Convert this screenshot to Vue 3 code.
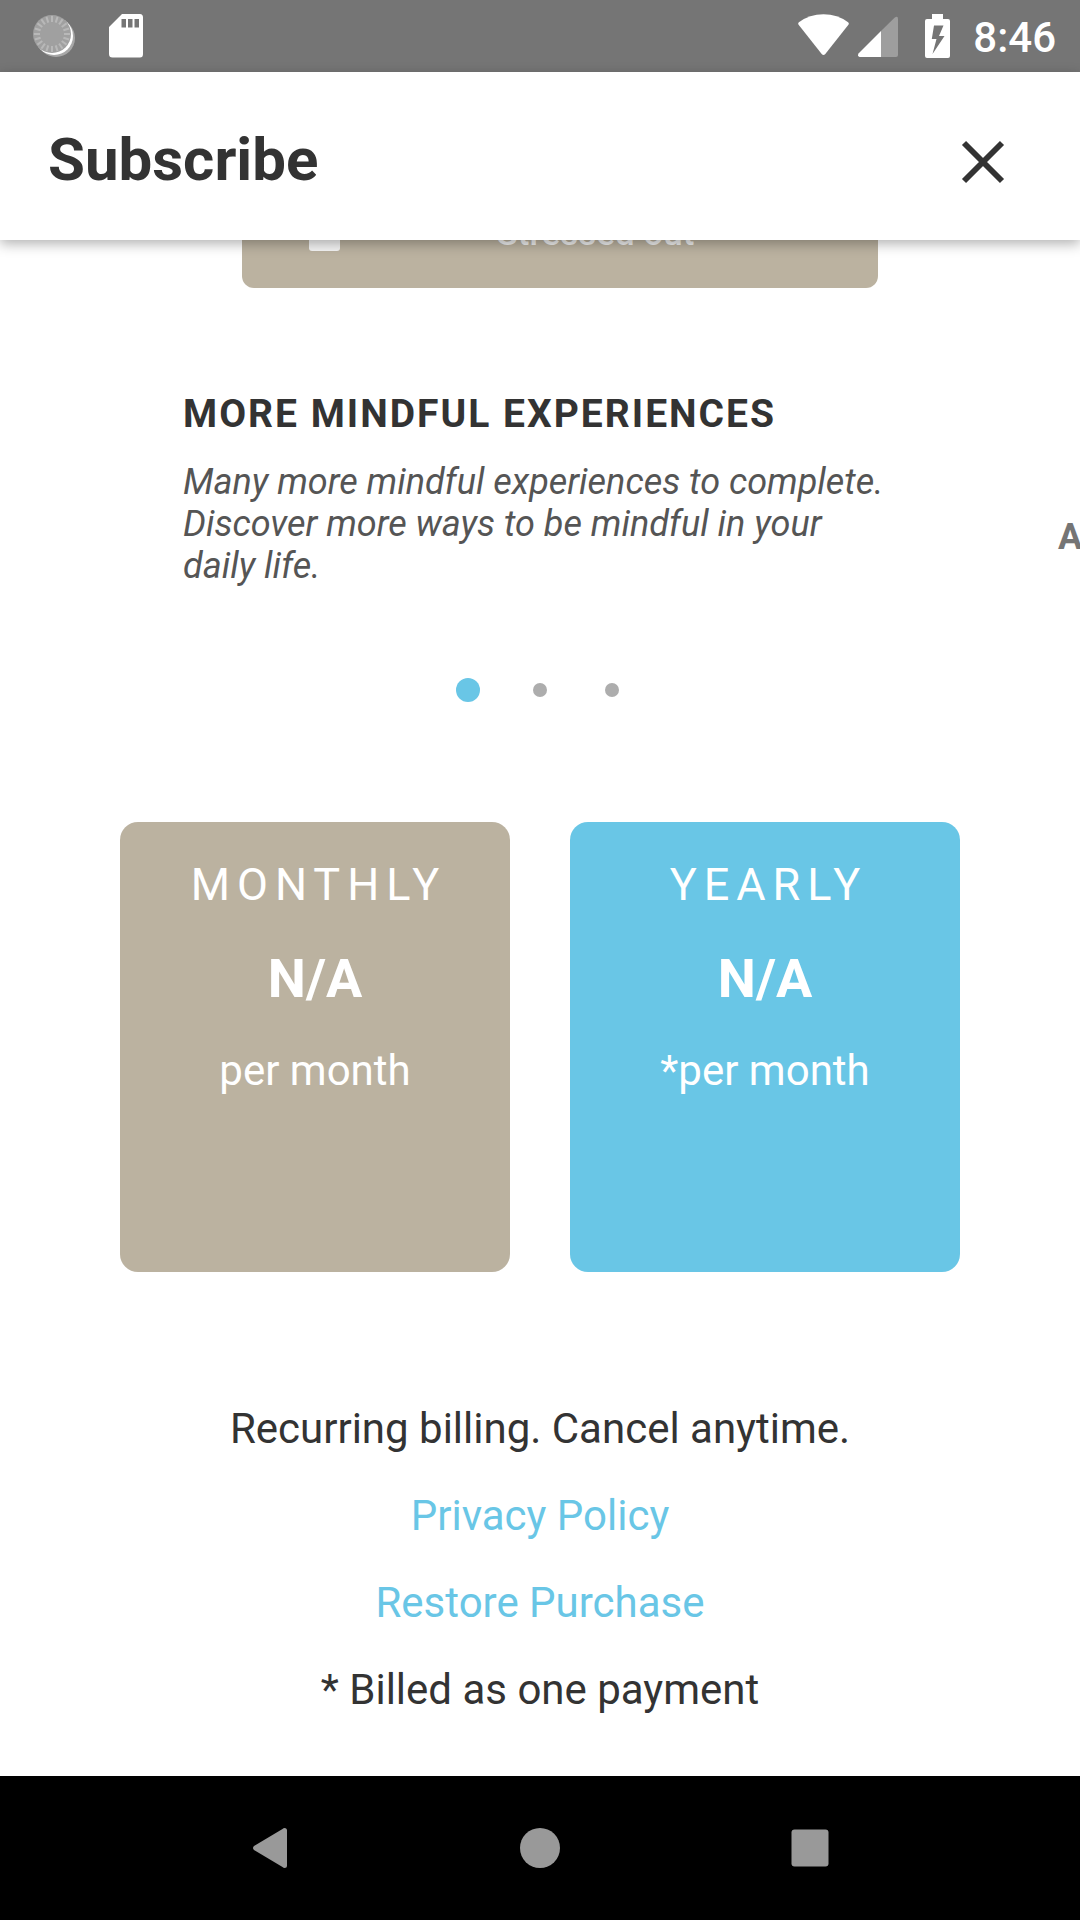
<script setup>
const plans = [
  { id: 'monthly', name: 'MONTHLY', price: 'N/A', period: 'per month' },
  { id: 'yearly', name: 'YEARLY', price: 'N/A', period: '*per month' }
]
const slideCount = 3
const activeSlide = 1
const ticks = Array.from({ length: 20 }, (_, i) => i * 18)
</script>

<template>
  <div class="screen">
    <div class="status">
      <div class="status-left">
        <svg width="44" height="48" viewBox="0 0 44 48" aria-hidden="true">
          <circle cx="24" cy="24" r="19" fill="#a8a8a8" />
          <circle cx="22" cy="22" r="19" fill="#fff" />
          <circle cx="20" cy="20" r="19" fill="#a0a0a0" />
          <g stroke="#b8b8b8" stroke-width="2">
            <line
              v-for="t in ticks"
              :key="t"
              x1="20"
              y1="2"
              x2="20"
              y2="8"
              :transform="`rotate(${t} 20 20)`"
            />
          </g>
        </svg>
        <svg width="34" height="48" viewBox="0 0 34 48" aria-hidden="true">
          <path
            fill="#fff"
            fill-rule="evenodd"
            d="M13 0H31Q34 0 34 3.500V40Q34 43.500 31 43.500H3.500Q0 43.500 0 40V13ZM12.500 5V13.500H17V5ZM19 5V13.500H23.500V5ZM25.500 5V13.500H30V5Z"
          />
        </svg>
      </div>
      <div class="status-right">
        <svg class="wifi" width="51" height="48" viewBox="0 0 51 48" aria-hidden="true">
          <path fill="#fff" d="M.6 10.800Q-.4 9.300 .9 8.200Q11.500 .2 25.500 .2Q39.500 .2 50.100 8.200Q51.400 9.300 50.400 10.800L27.300 40Q25.500 42 23.700 40Z" />
        </svg>
        <svg class="signal" width="40" height="48" viewBox="0 0 40 48" aria-hidden="true">
          <path fill="#9e9e9e" d="M23 17L36.500 3.700Q40 1.500 40 5V41Q40 43 38 43H23Z" />
          <path fill="#fff" d="M23 17V43H1.500Q-.8 42.500 .5 39.500Z" />
        </svg>
        <svg class="battery" width="25" height="48" viewBox="0 0 25 48" aria-hidden="true">
          <path
            fill="#fff"
            fill-rule="evenodd"
            d="M7 0H18V5H23Q25 5 25 7V42Q25 44 23 44H2Q0 44 0 42V7Q0 5 2 5H7ZM9 11.500L6.800 25H11.500L7.500 40L19.500 22H14L18.500 11.500Z"
          />
        </svg>
        <span class="clock">8:46</span>
      </div>
    </div>

    <header class="header">
      <h1>Subscribe</h1>
      <button class="close" type="button" aria-label="Close">
        <svg width="60" height="60" viewBox="0 0 60 60" aria-hidden="true">
          <path d="M11 13L49 51M49 13L11 51" stroke="#333" stroke-width="5.800" fill="none" />
        </svg>
      </button>
    </header>

    <main class="content">
      <section class="carousel">
        <article class="slide">
          <div class="preview">
            <span class="preview-box"></span>
            <span class="preview-text">Stressed out</span>
          </div>
          <h2>MORE MINDFUL EXPERIENCES</h2>
          <p>Many more mindful experiences to complete. Discover more ways to be mindful in your daily life.</p>
        </article>
        <article class="next-slide">A</article>
      </section>

      <div class="dots">
        <span v-for="n in slideCount" :key="n" class="dot-cell">
          <span class="dot" :class="{ active: n === activeSlide }"></span>
        </span>
      </div>

      <section class="plans">
        <button v-for="plan in plans" :key="plan.id" type="button" class="plan" :class="plan.id">
          <span class="plan-name">{{ plan.name }}</span>
          <span class="plan-price">{{ plan.price }}</span>
          <span class="plan-period">{{ plan.period }}</span>
        </button>
      </section>

      <section class="legal">
        <p>Recurring billing. Cancel anytime.</p>
        <a href="#privacy">Privacy Policy</a>
        <a href="#restore">Restore Purchase</a>
        <p>* Billed as one payment</p>
      </section>
    </main>

    <nav class="nav">
      <button type="button" aria-label="Back">
        <svg width="40" height="40" viewBox="0 0 40 40" aria-hidden="true">
          <path fill="#999" d="M34.500 0Q37 0 37 2.500V37.500Q37 40 34.500 40Q33.500 40 32.500 39L4 22Q2 20 4 18L32.500 1Q33.500 0 34.500 0Z" />
        </svg>
      </button>
      <button type="button" aria-label="Home">
        <svg width="40" height="40" viewBox="0 0 40 40" aria-hidden="true">
          <circle cx="20" cy="20" r="20" fill="#999" />
        </svg>
      </button>
      <button type="button" aria-label="Recent apps">
        <svg width="40" height="40" viewBox="0 0 40 40" aria-hidden="true">
          <rect x="1.500" y="1.500" width="37" height="37" rx="3" fill="#999" />
        </svg>
      </button>
    </nav>
  </div>
</template>

<style>
body {
  margin: 0;
  background: #fff;
}
</style>

<style scoped>
.screen {
  display: flex;
  flex-direction: column;
  min-height: 100vh;
  background: #fff;
  color: #333;
  font-family: Roboto, "Liberation Sans", sans-serif;
}

h1,
h2,
p {
  margin: 0;
}

button {
  border: 0;
  padding: 0;
  background: none;
  color: inherit;
  font-family: inherit;
}

svg {
  display: block;
}

.status {
  display: flex;
  align-items: center;
  justify-content: space-between;
  box-sizing: border-box;
  height: 72px;
  padding: 4px 24px 0 32px;
  background: #757575;
  color: #fff;
}

.status-left,
.status-right {
  display: flex;
  align-items: center;
}

.status-left {
  gap: 33px;
}

.signal {
  margin-left: 9px;
}

.battery {
  margin-left: 27px;
}

.clock {
  margin-left: 23px;
  font-size: 42px;
  font-weight: 500;
  line-height: 50px;
}

.header {
  position: relative;
  z-index: 1;
  display: flex;
  align-items: center;
  justify-content: space-between;
  box-sizing: border-box;
  height: 168px;
  padding: 8px 67px 0 48px;
  background: #fff;
  box-shadow: 0 4px 12px rgba(0, 0, 0, 0.3);
}

h1 {
  font-size: 60px;
  font-weight: 700;
  line-height: 72px;
}

.content {
  flex: 1;
  overflow: hidden;
}

.carousel {
  display: flex;
  align-items: flex-end;
  margin-top: -72px;
  padding-left: 16.667%;
  overflow: hidden;
}

.slide {
  flex: 0 0 80%;
}

.preview {
  display: flex;
  align-items: center;
  box-sizing: border-box;
  height: 120px;
  margin: 0 22px 102px 62px;
  padding: 45px 27px 33px 67px;
  border-radius: 12px;
  background: #bbb2a0;
}

.preview-box {
  width: 31px;
  height: 34px;
  border-radius: 3px;
  background: #f5f5f5;
}

.preview-text {
  flex: 1;
  color: #f0f0f0;
  font-size: 35px;
  font-weight: 500;
  line-height: 42px;
  text-align: center;
}

h2 {
  margin-left: 3px;
  font-size: 39px;
  font-weight: 700;
  line-height: 48px;
  letter-spacing: 2px;
  white-space: nowrap;
}

.slide p {
  margin-top: 23px;
  padding-left: 3px;
  color: #555;
  font-size: 36px;
  font-style: italic;
  line-height: 42px;
}

.next-slide {
  flex: none;
  padding: 0 0 29px 158px;
  color: #757575;
  font-size: 36px;
  font-weight: 700;
  line-height: 42px;
}

.dots {
  display: flex;
  justify-content: center;
  margin-top: 91px;
}

.dot-cell {
  display: flex;
  align-items: center;
  justify-content: center;
  width: 72px;
  height: 24px;
}

.dot {
  width: 14px;
  height: 14px;
  border-radius: 50%;
  background: #adadad;
}

.dot.active {
  width: 24px;
  height: 24px;
  background: #69c6e6;
}

.plans {
  display: flex;
  gap: 60px;
  margin: 120px 120px 0;
}

.plan {
  display: flex;
  flex: 1;
  flex-direction: column;
  align-items: center;
  justify-content: flex-start;
  gap: 34px;
  box-sizing: border-box;
  height: 450px;
  padding-top: 36px;
  border-radius: 18px;
  color: #fff;
}

.monthly {
  background: #bbb2a0;
}

.yearly {
  background: #69c6e6;
}

.plan-name {
  padding-left: 7px;
  font-size: 45px;
  line-height: 54px;
  letter-spacing: 7px;
}

.plan-price {
  font-size: 54px;
  font-weight: 700;
  line-height: 66px;
}

.plan-period {
  font-size: 42px;
  line-height: 50px;
}

.legal {
  display: flex;
  flex-direction: column;
  align-items: center;
  gap: 36px;
  padding: 131px 24px 48px;
  font-size: 42px;
  line-height: 51px;
  text-align: center;
}

.legal a {
  color: #69c6e6;
  text-decoration: none;
}

.nav {
  display: flex;
  align-items: center;
  justify-content: center;
  height: 144px;
  background: #000;
}

.nav button {
  display: flex;
  align-items: center;
  justify-content: center;
  width: 25%;
  height: 100%;
}
</style>
